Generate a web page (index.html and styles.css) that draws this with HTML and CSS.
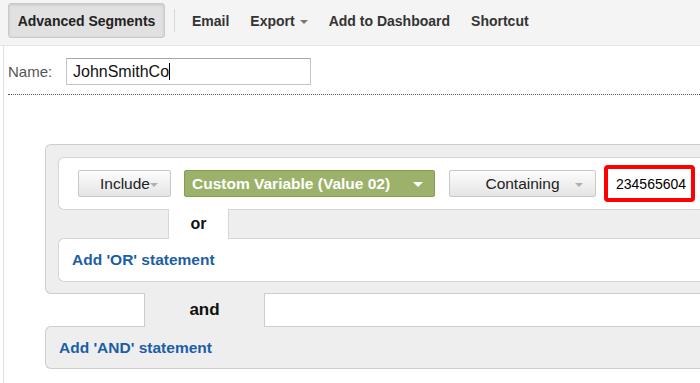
FILE: index.html
```html
<!DOCTYPE html>
<html lang="en">
<head>
    <meta charset="UTF-8">
    <title>Advanced Segments</title>
    <link rel="stylesheet" href="styles.css">
</head>
<body>
    <div class="toolbar">
        <span class="tb-btn">Advanced Segments</span>
        <span class="tb-sep"></span>
        <span class="tb-link">Email</span>
        <span class="tb-link">Export<span class="tb-caret"></span></span>
        <span class="tb-link">Add to Dashboard</span>
        <span class="tb-link">Shortcut</span>
    </div>

    <div class="panel">
        <div class="name-row">
            <label class="name-label">Name:</label>
            <div class="name-input">JohnSmithCo<span class="cursor"></span></div>
        </div>

        <!-- the segment boxes run on past the right edge of the window -->
        <div class="segment">
            <div class="group">
                <div class="cond">
                    <span class="sel sel-include">Include<span class="caret"></span></span>
                    <span class="sel sel-dim">Custom Variable (Value 02)<span class="caret caret-white"></span></span>
                    <span class="sel sel-op">Containing<span class="caret"></span></span>
                    <span class="value-box">234565604</span>
                </div>
                <div class="tab or-tab">or</div>
                <div class="add-box or-box">Add 'OR' statement</div>
            </div>
            <div class="tab and-tab">and</div>
            <div class="add-box and-box">Add 'AND' statement</div>
        </div>
    </div>
</body>
</html>
```

FILE: styles.css
```css
body {
    font-family: "Liberation Sans", Arial, sans-serif;
    color: #333;
    background-color: white;
    margin: 0;
    width: 700px;
    height: 383px;
    overflow: hidden;
}

/* toolbar */
.toolbar {
    display: flex;
    align-items: center;
    height: 35px;
    padding: 3px 0 7px 8px;
    background-color: #f4f4f4;
    border-bottom: 1px solid #e6e6e6;
}
.tb-btn {
    box-sizing: border-box;
    display: flex;
    align-items: center;
    justify-content: center;
    width: 157px;
    height: 35px;
    font-size: 14px;
    font-weight: bold;
    color: #222;
    background-color: #e1e1e1;
    border: 1px solid #c9c9c9;
    border-radius: 3px;
    box-shadow: inset 0 1px 3px rgba(0,0,0,0.12);
}
.tb-sep {
    width: 1px;
    height: 23px;
    background-color: #d8d8d8;
    margin: 0 17px 0 9px;
}
.tb-link {
    display: flex;
    align-items: center;
    font-size: 14px;
    font-weight: bold;
    color: #333;
    margin-right: 21px;
}
.tb-caret {
    width: 0;
    height: 0;
    margin-left: 5px;
    margin-top: 2px;
    border-left: 4px solid transparent;
    border-right: 4px solid transparent;
    border-top: 4px solid #777;
}

/* content */
.panel {
    margin-left: 3px;
    border-left: 1px solid #e0e0e0;
    height: 337px;
}
.name-row {
    display: flex;
    align-items: center;
    margin-left: 4px;
    padding: 12px 0 9px 0;
    border-bottom: 1px dotted #555;
}
.name-label {
    width: 58px;
    font-size: 15px;
    color: #555;
}
.name-input {
    box-sizing: border-box;
    display: flex;
    align-items: center;
    width: 245px;
    height: 27px;
    padding-left: 6px;
    font-size: 16px;
    color: #111;
    border: 1px solid #c4c4c4;
    border-top-color: #a8a8a8;
}
.cursor {
    width: 1px;
    height: 17px;
    background-color: #000;
}

.segment {
    margin: 49px 0 0 41px;
}
.group {
    background-color: #eee;
    border: 1px solid #cdcdcd;
    border-right: none;
    border-radius: 6px 0 0 6px;
    padding: 12px 0 11px 12px;
}
.cond {
    display: flex;
    align-items: center;
    height: 51px;
    padding-left: 19px;
    background-color: white;
    border: 1px solid #d6d6d6;
    border-right: none;
    border-radius: 6px 0 0 6px;
}
.sel {
    box-sizing: border-box;
    position: relative;
    display: flex;
    align-items: center;
    justify-content: center;
    height: 27px;
    font-size: 15.5px;
    color: #222;
    background: linear-gradient(#fcfcfc, #e5e5e5);
    border: 1px solid #c8c8c8;
    border-radius: 2px;
}
.sel-include {
    width: 93px;
    margin-right: 13px;
    padding-left: 1px;
}
.sel-dim {
    width: 251px;
    justify-content: flex-start;
    padding-left: 7px;
    font-size: 15.5px;
    font-weight: bold;
    color: white;
    background: #9cb26a;
    border-color: #869c55;
    margin-right: 14px;
}
.sel-op {
    width: 147px;
    margin-right: 8px;
}
.caret {
    position: absolute;
    right: 12px;
    top: 12px;
    width: 0;
    height: 0;
    border-left: 4px solid transparent;
    border-right: 4px solid transparent;
    border-top: 4px solid #b0b0b0;
}
.caret-white {
    right: 11px;
    top: 11px;
    border-left-width: 5px;
    border-right-width: 5px;
    border-top: 5px solid white;
}
.value-box {
    box-sizing: border-box;
    display: flex;
    align-items: center;
    width: 91px;
    height: 37px;
    padding-left: 8px;
    font-size: 14px;
    color: #000;
    background-color: white;
    border: 4px solid #ff0000;
    border-radius: 4px;
}

.tab {
    box-sizing: border-box;
    position: relative;
    z-index: 1;
    display: flex;
    align-items: center;
    justify-content: center;
    font-weight: bold;
    color: #111;
}
.or-tab {
    width: 61px;
    height: 30px;
    margin: -1px 0 -1px 110px;
    font-size: 16px;
    background-color: white;
    border-left: 1px solid #d6d6d6;
    border-right: 1px solid #d6d6d6;
}
.and-tab {
    width: 121px;
    height: 34px;
    margin: -1px 0 -1px 99px;
    font-size: 17px;
    background-color: #eee;
    border-left: 1px solid #cdcdcd;
    border-right: 1px solid #cdcdcd;
}
.add-box {
    display: flex;
    align-items: center;
    font-size: 15.5px;
    font-weight: bold;
    color: #1b5ea6;
    border-radius: 6px 0 0 6px;
}
.or-box {
    height: 42px;
    padding-left: 13px;
    background-color: white;
    border: 1px solid #d6d6d6;
    border-right: none;
}
.and-box {
    height: 41px;
    padding-left: 13px;
    background-color: #eee;
    border: 1px solid #cdcdcd;
    border-right: none;
}
```
